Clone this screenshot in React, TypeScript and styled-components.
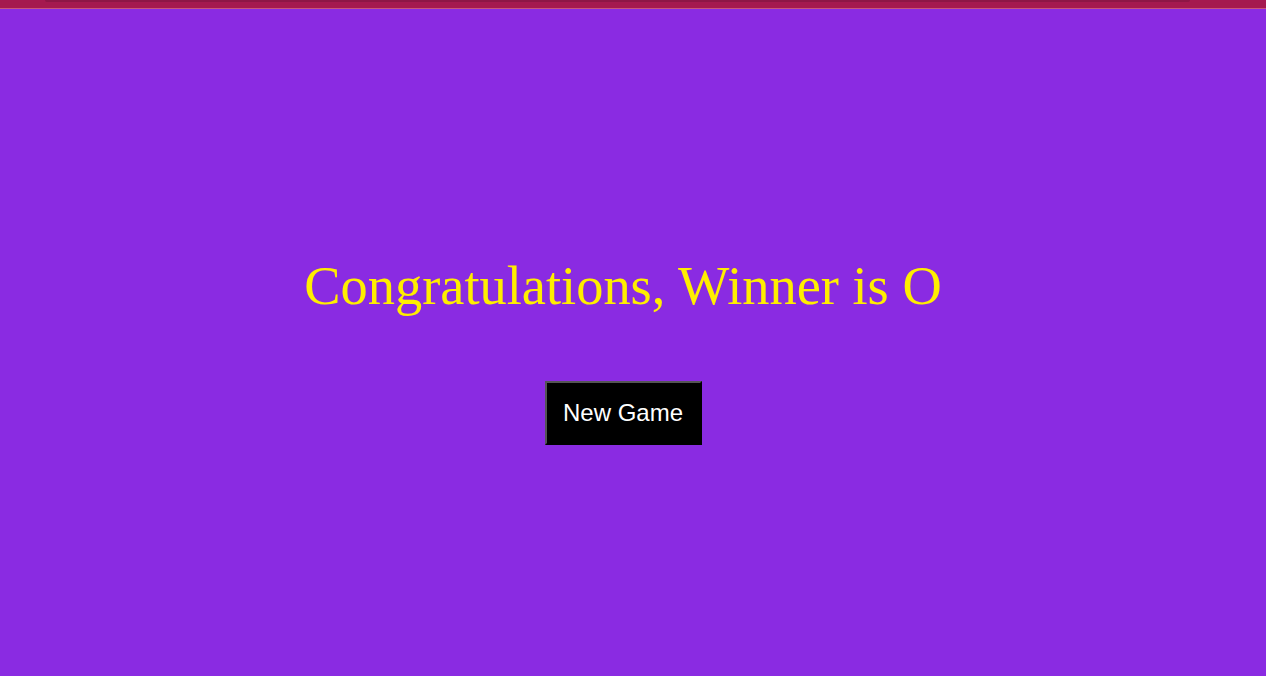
import styled, { createGlobalStyle } from "styled-components";

const GlobalStyle = createGlobalStyle`
  html, body {
    margin: 0;
    padding: 0;
    background: #8a2be2;
    font-family: "Liberation Serif", "Times New Roman", serif;
  }
`;

const TopBar = styled.div`
  height: 8px;
  background: #a5194f;
  border-bottom: 1px solid #c9567a;
  display: flex;
  justify-content: center;
  padding: 0 76px 0 45px;
`;

const TopStrip = styled.div`
  flex: 1;
  height: 2px;
  background: #8e1646;
  border-radius: 0 0 4px 4px;
`;

const Page = styled.div`
  height: 667px;
  display: flex;
  flex-direction: column;
  align-items: center;
  padding-right: 20px;
`;

const Title = styled.h1`
  margin: 237px 0 0;
  color: #ffee00;
  font-size: 54.4px;
  font-weight: 400;
  line-height: 80px;
`;

const NewGameButton = styled.button`
  margin-top: 55px;
  width: 157px;
  height: 64px;
  background: #000;
  color: #fff;
  font-family: "Liberation Sans", Arial, sans-serif;
  font-size: 24px;
  border: 2px outset #555;
  cursor: pointer;
`;

const App = () => {
  return (
    <>
      <GlobalStyle />
      <TopBar>
        <TopStrip />
      </TopBar>
      <Page>
        <Title>Congratulations, Winner is O</Title>
        <NewGameButton>New Game</NewGameButton>
      </Page>
    </>
  );
};

export default App;
